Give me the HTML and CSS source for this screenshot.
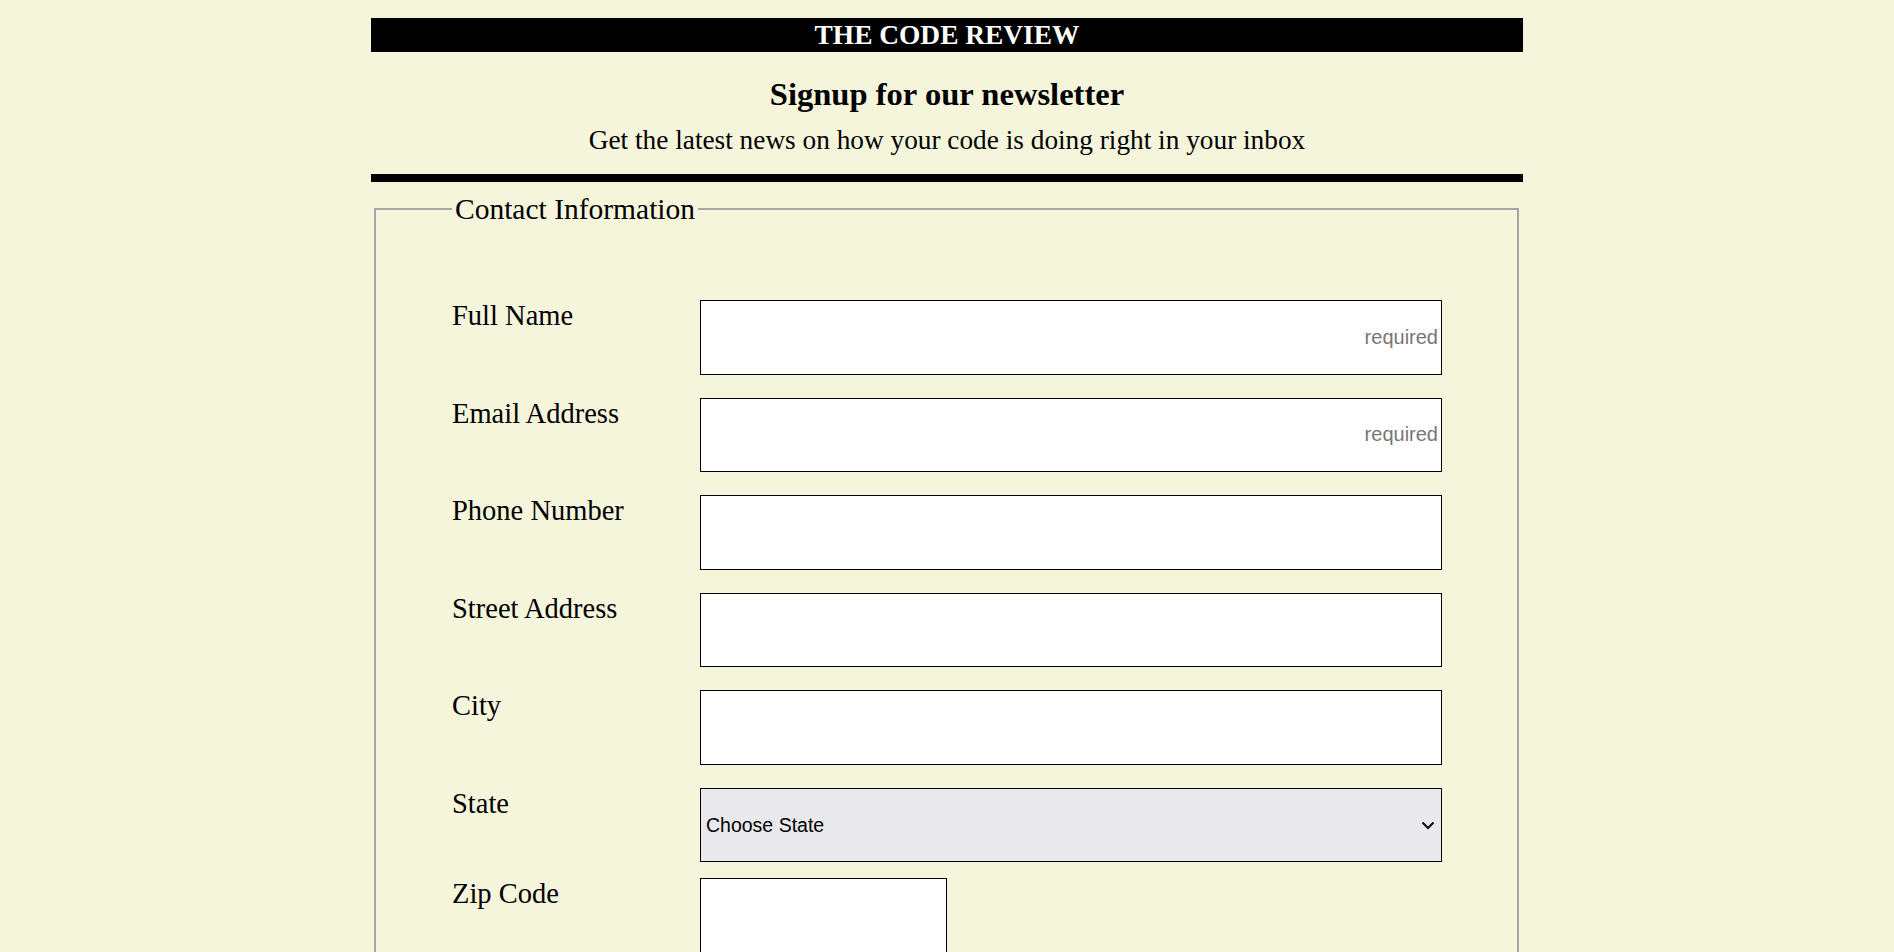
FILE: index.html
```html
<!DOCTYPE html>
<html lang="en">
<head>
<meta charset="utf-8">
<title>The Code Review - Newsletter Signup</title>
<link rel="stylesheet" href="styles.css">
</head>
<body>
<div class="page">
  <header class="masthead">THE CODE REVIEW</header>
  <h1 class="title">Signup for our newsletter</h1>
  <p class="subtitle">Get the latest news on how your code is doing right in your inbox</p>
  <div class="rule"></div>
  <form class="signup">
    <fieldset class="contact">
      <legend class="legend">Contact Information</legend>
      <div class="row first">
        <label class="label" for="name">Full Name</label>
        <input class="field" id="name" type="text" placeholder="required">
      </div>
      <div class="row">
        <label class="label" for="email">Email Address</label>
        <input class="field" id="email" type="email" placeholder="required">
      </div>
      <div class="row">
        <label class="label" for="phone">Phone Number</label>
        <input class="field" id="phone" type="tel">
      </div>
      <div class="row">
        <label class="label" for="street">Street Address</label>
        <input class="field" id="street" type="text">
      </div>
      <div class="row">
        <label class="label" for="city">City</label>
        <input class="field" id="city" type="text">
      </div>
      <div class="row row-select">
        <label class="label" for="state">State</label>
        <div class="select-wrap">
          <select class="select" id="state">
            <option>Choose State</option>
          </select>
          <svg class="chevron" width="14" height="9" viewBox="0 0 14 9" aria-hidden="true"><path d="M1.5 1.5 L7 7 L12.5 1.5" fill="none" stroke="#111" stroke-width="2.2"/></svg>
        </div>
      </div>
      <div class="row">
        <label class="label" for="zip">Zip Code</label>
        <input class="field zip" id="zip" type="text">
      </div>
    </fieldset>
  </form>
</div>
</body>
</html>
```

FILE: styles.css
```css
html, body {
  margin: 0;
  padding: 0;
  background: #f5f5dc;
}

body {
  font-family: "Liberation Serif", "Times New Roman", serif;
  color: #000;
}

.page {
  width: 1152px;
  margin: 0 auto;
  padding-top: 18px;
}

.masthead {
  background: #000;
  color: #fff;
  height: 34px;
  line-height: 34px;
  font-size: 27.4px;
  font-weight: bold;
  text-align: center;
}

.title {
  margin: 23px 0 0;
  font-size: 32.6px;
  line-height: 38px;
  font-weight: bold;
  text-align: center;
}

.subtitle {
  margin: 11px 0 0;
  font-size: 27.3px;
  line-height: 32px;
  text-align: center;
}

.rule {
  margin-top: 18px;
  height: 8px;
  background: #000;
}

.signup {
  margin: 0;
}

.contact {
  margin: 10px 4px 0 3px;
  padding: 0 75px 0 76px;
  border: 2px solid #a6a6a6;
  min-width: 0;
}

.legend {
  padding: 0 3px;
  font-size: 29.5px;
  line-height: 34px;
}

.row {
  display: grid;
  grid-template-columns: 248px 1fr;
  align-items: start;
  margin-bottom: 23px;
}

.row.first {
  margin-top: 74px;
}

.row-select {
  margin-bottom: 16px;
}

.label {
  font-size: 28.5px;
  line-height: 32px;
  margin-top: 0;
}

.field {
  box-sizing: border-box;
  height: 74.6px;
  width: 100%;
  margin: 0;
  padding: 1px 3px;
  border: 1px solid #000;
  background: #fff;
  font-family: "Liberation Sans", Arial, sans-serif;
  font-size: 20px;
  text-align: right;
  outline: none;
}

.field::placeholder {
  color: #767676;
  opacity: 1;
}

.field.zip {
  width: 247px;
}

.select-wrap {
  position: relative;
}

.select {
  box-sizing: border-box;
  display: block;
  width: 100%;
  height: 74px;
  margin: 0;
  padding: 0 30px 0 5px;
  border: 1px solid #000;
  border-radius: 0;
  background: #e9e9ed;
  color: #000;
  font-family: "Liberation Sans", Arial, sans-serif;
  font-size: 19.5px;
  -webkit-appearance: none;
  appearance: none;
}

.chevron {
  position: absolute;
  right: 7px;
  top: 33px;
  pointer-events: none;
}
```
